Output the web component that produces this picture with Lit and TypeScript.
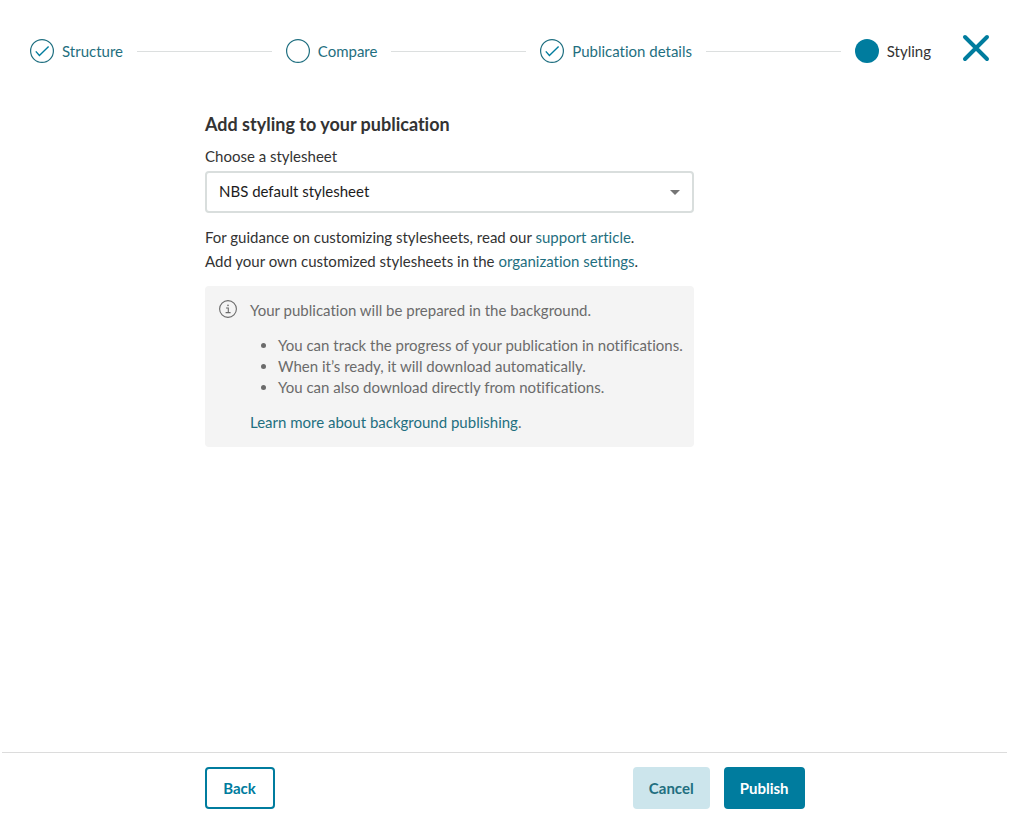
import { LitElement, html, css, svg, nothing } from "lit";
import { customElement } from "lit/decorators.js";
import { classMap } from "lit/directives/class-map.js";

type StepState = "done" | "open" | "current";

interface Step {
  label: string;
  state: StepState;
}

const STEPS: Step[] = [
  { label: "Structure", state: "done" },
  { label: "Compare", state: "open" },
  { label: "Publication details", state: "done" },
  { label: "Styling", state: "current" },
];

@customElement("app-root")
export class AppRoot extends LitElement {
  static styles = css`
    :host {
      display: flex;
      flex-direction: column;
      min-height: 100vh;
      box-sizing: border-box;
      background: #fff;
      color: #333;
      font-family: Lato, "Noto Sans", sans-serif;
      font-size: 15px;
      line-height: 24px;
      font-variant-ligatures: none;
    }
    * {
      box-sizing: border-box;
    }
    a {
      color: #1f6f80;
      text-decoration: none;
    }
    header {
      display: flex;
      align-items: center;
      gap: 31px;
      padding: 33px 20px 0 30px;
    }
    .steps {
      flex: 1;
      display: flex;
      align-items: center;
      gap: 14px;
      margin: 0;
      padding: 6px 0 0;
      list-style: none;
    }
    .step {
      display: flex;
      align-items: center;
      gap: 8px;
      white-space: nowrap;
    }
    .step.current {
      color: #333;
    }
    .line {
      flex: 1;
      height: 1px;
      background: #dcdfdf;
    }
    .mark {
      display: block;
      width: 24px;
      height: 24px;
    }
    .close {
      display: block;
      padding: 0;
      border: 0;
      background: none;
      cursor: pointer;
    }
    .close svg {
      display: block;
      width: 28px;
      height: 28px;
    }
    main,
    .actions {
      width: 100%;
      max-width: 600px;
      margin: 0 auto;
    }
    main {
      flex: 1;
      padding-top: 49px;
    }
    .form {
      max-width: 489px;
    }
    h1 {
      margin: 0;
      font-size: 18px;
      line-height: 24px;
      font-weight: 700;
    }
    label {
      display: block;
      margin: 8px 0 3px;
    }
    .select {
      display: grid;
      align-items: center;
    }
    .select > * {
      grid-area: 1 / 1;
    }
    select {
      appearance: none;
      width: 100%;
      height: 42px;
      padding: 0 36px 2px 12px;
      border: 2px solid #d9dedd;
      border-radius: 4px;
      background: #fff;
      color: #1c1c1c;
      font: inherit;
      font-variant-ligatures: none;
    }
    .arrow {
      justify-self: end;
      margin-right: 14px;
      width: 10px;
      height: 5px;
      pointer-events: none;
    }
    .help {
      margin: 12px 0 13px;
    }
    .info {
      display: flex;
      gap: 13px;
      padding: 14px 4px 14px 14px;
      border-radius: 4px;
      background: #f4f4f4;
      color: #6b6b6b;
      line-height: 21px;
    }
    .info svg {
      flex: none;
      width: 18px;
      height: 18px;
    }
    .info p {
      margin: 0;
    }
    .info ul {
      margin: 14px 0;
      padding-left: 28px;
    }
    footer {
      margin: 0 3px 0 2px;
      padding: 14px 0 15px;
      border-top: 1px solid #dcdcdc;
    }
    .actions {
      display: flex;
      gap: 14px;
    }
    .btn {
      min-width: 70px;
      height: 42px;
      padding: 0 14px;
      border: 2px solid #007c9e;
      border-radius: 4px;
      font: inherit;
      font-weight: 700;
      cursor: pointer;
    }
    .back {
      margin-right: auto;
      background: #fff;
      color: #007c9e;
    }
    .cancel {
      border-color: #cce5ec;
      background: #cce5ec;
      color: #1f6f80;
    }
    .publish {
      background: #007c9e;
      color: #fff;
    }
  `;

  private mark(state: StepState) {
    return html`<svg class="mark" viewBox="0 0 24 24" fill="none" aria-hidden="true">
      ${state === "current"
        ? svg`<circle cx="12" cy="12" r="12" fill="#007c9e" />`
        : svg`<circle cx="12" cy="12" r="11.4" stroke="#1f6f80" stroke-width="1.2" />`}
      ${state === "done"
        ? svg`<path d="M5.8 12.4 9.4 16.4 18.6 7.4" stroke="#007c9e" stroke-width="1.4" />`
        : nothing}
    </svg>`;
  }

  private step(step: Step, index: number) {
    const current = step.state === "current";
    return html`
      ${index > 0 ? html`<li class="line" role="presentation"></li>` : nothing}
      <li>
        ${current
          ? html`<span class=${classMap({ step: true, current })} aria-current="step"
              >${this.mark(step.state)}${step.label}</span
            >`
          : html`<a class="step" href="#">${this.mark(step.state)}${step.label}</a>`}
      </li>
    `;
  }

  render() {
    return html`
      <header>
        <ol class="steps">
          ${STEPS.map((s, i) => this.step(s, i))}
        </ol>
        <button class="close" type="button" aria-label="Close">
          <svg viewBox="0 0 28 28" fill="none" stroke="#007c9e" stroke-width="4" stroke-linecap="round">
            <path d="M3 3 25 25M25 3 3 25" />
          </svg>
        </button>
      </header>
      <main>
        <div class="form">
          <h1>Add styling to your publication</h1>
          <label for="stylesheet">Choose a stylesheet</label>
          <div class="select">
            <select id="stylesheet">
              <option>NBS default stylesheet</option>
            </select>
            <svg class="arrow" viewBox="0 0 10 5" aria-hidden="true">
              <path d="M0 0H10L5 5Z" fill="#757575" />
            </svg>
          </div>
          <div class="help">
            For guidance on customizing stylesheets, read our <a href="#">support article</a>.<br />
            Add your own customized stylesheets in the <a href="#">organization settings</a>.
          </div>
          <div class="info">
            <svg viewBox="0 0 18 18" fill="none" stroke="#6b6b6b" aria-hidden="true">
              <circle cx="9" cy="9" r="8.4" stroke-width="1.1" />
              <path d="M7 8H9.3V12.6M6.6 12.6H11.6" stroke-width="1.1" />
              <circle cx="9" cy="5.4" r="0.8" fill="#6b6b6b" stroke="none" />
            </svg>
            <div>
              <p>Your publication will be prepared in the background.</p>
              <ul>
                <li>You can track the progress of your publication in notifications.</li>
                <li>When it’s ready, it will download automatically.</li>
                <li>You can also download directly from notifications.</li>
              </ul>
              <p><a href="#">Learn more about background publishing</a>.</p>
            </div>
          </div>
        </div>
      </main>
      <footer>
        <div class="actions">
          <button class="btn back" type="button">Back</button>
          <button class="btn cancel" type="button">Cancel</button>
          <button class="btn publish" type="button">Publish</button>
        </div>
      </footer>
    `;
  }
}
